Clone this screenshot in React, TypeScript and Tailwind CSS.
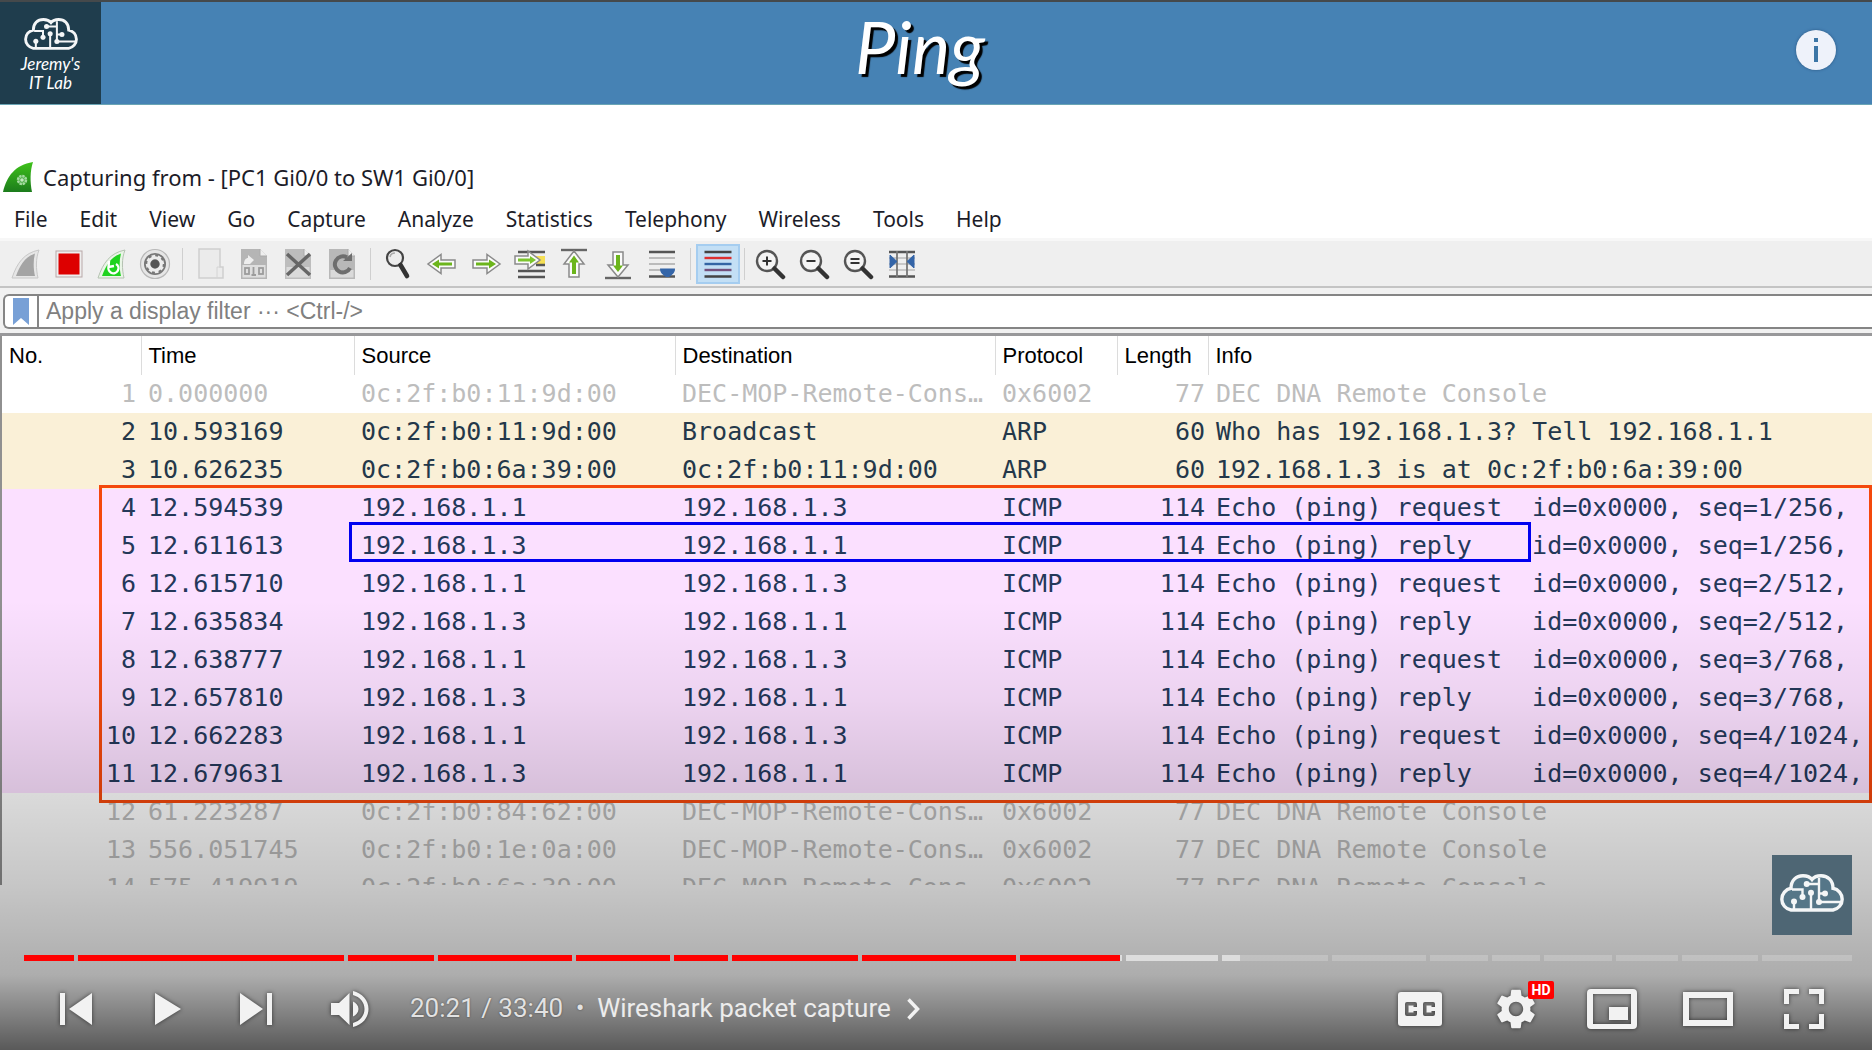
import React from "react";
import { MdSettings } from "react-icons/md";

type Kind = "dec" | "arp" | "icmp";
type Packet = [string, string, string, string, string, string, string, Kind];

const REMOTE = "DEC-MOP-Remote-Cons…";
const CONSOLE = "DEC DNA Remote Console";

const packets: Packet[] = [
  ["1", "0.000000", "0c:2f:b0:11:9d:00", REMOTE, "0x6002", "77", CONSOLE, "dec"],
  ["2", "10.593169", "0c:2f:b0:11:9d:00", "Broadcast", "ARP", "60", "Who has 192.168.1.3? Tell 192.168.1.1", "arp"],
  ["3", "10.626235", "0c:2f:b0:6a:39:00", "0c:2f:b0:11:9d:00", "ARP", "60", "192.168.1.3 is at 0c:2f:b0:6a:39:00", "arp"],
  ["4", "12.594539", "192.168.1.1", "192.168.1.3", "ICMP", "114", "Echo (ping) request  id=0x0000, seq=1/256,", "icmp"],
  ["5", "12.611613", "192.168.1.3", "192.168.1.1", "ICMP", "114", "Echo (ping) reply    id=0x0000, seq=1/256,", "icmp"],
  ["6", "12.615710", "192.168.1.1", "192.168.1.3", "ICMP", "114", "Echo (ping) request  id=0x0000, seq=2/512,", "icmp"],
  ["7", "12.635834", "192.168.1.3", "192.168.1.1", "ICMP", "114", "Echo (ping) reply    id=0x0000, seq=2/512,", "icmp"],
  ["8", "12.638777", "192.168.1.1", "192.168.1.3", "ICMP", "114", "Echo (ping) request  id=0x0000, seq=3/768,", "icmp"],
  ["9", "12.657810", "192.168.1.3", "192.168.1.1", "ICMP", "114", "Echo (ping) reply    id=0x0000, seq=3/768,", "icmp"],
  ["10", "12.662283", "192.168.1.1", "192.168.1.3", "ICMP", "114", "Echo (ping) request  id=0x0000, seq=4/1024,", "icmp"],
  ["11", "12.679631", "192.168.1.3", "192.168.1.1", "ICMP", "114", "Echo (ping) reply    id=0x0000, seq=4/1024,", "icmp"],
  ["12", "61.223287", "0c:2f:b0:84:62:00", REMOTE, "0x6002", "77", CONSOLE, "dec"],
  ["13", "556.051745", "0c:2f:b0:1e:0a:00", REMOTE, "0x6002", "77", CONSOLE, "dec"],
  ["14", "575.419919", "0c:2f:b0:6a:39:00", REMOTE, "0x6002", "77", CONSOLE, "dec"],
];

const rowStyle: Record<Kind, string> = {
  dec: "text-[#bdbdbd]",
  arp: "bg-[#faf0d7] text-[#24384a]",
  icmp: "bg-[#fbe0ff] text-[#24385a]",
};

const menus = ["File", "Edit", "View", "Go", "Capture", "Analyze", "Statistics", "Telephony", "Wireless", "Tools", "Help"];
const columns = ["No.", "Time", "Source", "Destination", "Protocol", "Length", "Info"];

/* Chapter lengths, with the share that is played and loaded. */
const chapters = [
  { size: 50, played: 100, loaded: 100 },
  { size: 266, played: 100, loaded: 100 },
  { size: 86, played: 100, loaded: 100 },
  { size: 134, played: 100, loaded: 100 },
  { size: 94, played: 100, loaded: 100 },
  { size: 54, played: 100, loaded: 100 },
  { size: 126, played: 100, loaded: 100 },
  { size: 154, played: 100, loaded: 100 },
  { size: 102, played: 98, loaded: 100 },
  { size: 92, played: 0, loaded: 100 },
  { size: 106, played: 0, loaded: 17 },
  { size: 94, played: 0, loaded: 0 },
  { size: 58, played: 0, loaded: 0 },
  { size: 48, played: 0, loaded: 0 },
  { size: 68, played: 0, loaded: 0 },
  { size: 62, played: 0, loaded: 0 },
  { size: 76, played: 0, loaded: 0 },
  { size: 90, played: 0, loaded: 0 },
];

function CloudLogo({ className, fill }: { className: string; fill: string }) {
  return (
    <svg viewBox="0 0 68 38" className={className} fill="none" stroke="#f4f6f7" aria-hidden="true">
      <path
        d="M13 36A11 11 0 0 1 13 14.300C13 6.500 18 1.800 25 1.800C29 1.800 32 3 34 5.500C36 3 39 1.800 43 1.800C50 1.800 55 6.500 55 14.300A11 11 0 0 1 55 36Z"
        fill={fill}
        strokeWidth="3.400"
      />
      <path d="M28.700 10H41M41 4V28M47 19.500H41M41 28H64M33 19V36M24.500 23V15.500H14M16 27V36" strokeWidth="2.400" />
      <g fill="#f4f6f7" stroke="none">
        <circle cx="28.700" cy="10" r="3" />
        <circle cx="47" cy="19.500" r="3" />
        <circle cx="41" cy="28" r="3" />
        <circle cx="33" cy="18.700" r="3" />
        <circle cx="24.500" cy="23" r="3" />
        <circle cx="16" cy="27.500" r="3" />
      </g>
    </svg>
  );
}

function Icon({ children }: { children: React.ReactNode }) {
  return (
    <svg viewBox="0 0 32 32" className="size-8" fill="none" aria-hidden="true">
      {children}
    </svg>
  );
}

const FIN = "M2 30C7 15 14 5 29 2C25.500 11 26 21 28 30Z";
const FIN_IN = "M6 28C10 17 15 9 25 5.500C23 13 23.500 21 25 28Z";
const DOC = "M3 1H22L29 8V31H3Z";
const ARROW_R = "M3 12H17V6.500L30 16L17 25.500V20H3Z";
const ARROW_R_IN = "M6 14.500H19V11.500L26 16L19 20.500V17.500H6Z";

function Magnifier({ children }: { children?: React.ReactNode }) {
  return (
    <Icon>
      <circle cx="13" cy="13" r="10" fill="#f4f4f4" stroke="#555" strokeWidth="2.400" />
      <path d="M20.500 20.500L29 29" stroke="#333" strokeWidth="4.500" strokeLinecap="round" />
      <g stroke="#333" strokeWidth="2">{children}</g>
    </Icon>
  );
}

const startTools: [string, React.ReactNode][] = [
  ["Start capture", <Icon><path d={FIN} fill="#e6e6e6" stroke="#c8c8c8" /><path d={FIN_IN} fill="#a4a4a4" /></Icon>],
  ["Stop capture", <Icon><rect x="3" y="3" width="26" height="26" fill="#eee" stroke="#b9a9a9" /><rect x="5.500" y="5.500" width="21" height="21" fill="#dd0000" /></Icon>],
  ["Restart capture", <Icon><path d={FIN} fill="#e9f5e6" stroke="#b5c2b2" /><path d={FIN_IN} fill="#1fd31f" /><path d="M13 18A5 5 0 1 0 20 16M13 13L12.500 19L18 18" stroke="#fff" strokeWidth="2.400" /></Icon>],
  ["Capture options", <Icon><circle cx="16" cy="16" r="14.500" fill="#e6e6e6" stroke="#b8b8b8" strokeWidth="1.200" /><circle cx="16" cy="16" r="11" fill="#777" /><circle cx="16" cy="16" r="7" stroke="#ececec" strokeWidth="4.500" /><circle cx="16" cy="16" r="8.800" stroke="#777" strokeWidth="2" strokeDasharray="3 3.900" /><circle cx="16" cy="16" r="4.300" fill="#555" /></Icon>],
];

const fileTools: [string, React.ReactNode][] = [
  ["Open", <Icon><path d="M5 1H26V19H29V30H5Z" fill="#ebebeb" stroke="#cfcfcf" strokeWidth="1.500" /><path d="M26 19H23V30" stroke="#d4d4d4" /></Icon>],
  ["Save", <Icon><path d={DOC} fill="#b5b5b5" /><path d="M4.500 17H27.500V29.500H4.500Z" fill="#dedede" /><path d="M22 1V8H29" fill="#eee" stroke="#aaa" /><path d="M6 16C6 12 8 10 10 10V7L16 12L12 16Z" fill="#eee" /><g stroke="#9c9c9c" strokeWidth="1.800"><rect x="7" y="20" width="4" height="6" /><path d="M15.500 19V27M13.500 27H18" /><rect x="21" y="20" width="4" height="6" /></g></Icon>],
  ["Close", <Icon><path d={DOC} fill="#bdbdbd" /><path d="M4.500 19H27.500V29.500H4.500Z" fill="#dadada" /><path d="M22 1V8H29" fill="#eee" stroke="#aaa" /><path d="M5 6L28 27M28 6L5 27" stroke="#666" strokeWidth="3.500" /></Icon>],
  ["Reload", <Icon><path d={DOC} fill="#b8b8b8" /><path d="M4.500 22H27.500V29.500H4.500Z" fill="#dadada" /><path d="M22 1V8H29" fill="#eee" stroke="#aaa" /><path d="M21 9.500A8 8 0 1 0 24 20" stroke="#6e6e6e" strokeWidth="4" /><path d="M17 13H26V5Z" fill="#6e6e6e" /></Icon>],
];

const goTools: [string, React.ReactNode][] = [
  ["Find", <Icon><circle cx="13" cy="10" r="8" fill="#ececec" stroke="#444" strokeWidth="2.200" /><path d="M8 9A5 5 0 0 1 13 5" stroke="#aaa" strokeWidth="1.500" /><path d="M18.500 17L25 28" stroke="#333" strokeWidth="4.600" strokeLinecap="round" /></Icon>],
  ["Previous packet", <Icon><g transform="matrix(-1 0 0 1 32 0)"><path d={ARROW_R} fill="#fbfbfb" stroke="#8a8a8a" strokeWidth="1.500" /><path d={ARROW_R_IN} fill="#6cb51c" /></g></Icon>],
  ["Next packet", <Icon><path d={ARROW_R} fill="#fbfbfb" stroke="#8a8a8a" strokeWidth="1.500" /><path d={ARROW_R_IN} fill="#6cb51c" /></Icon>],
  ["Go to packet", <Icon><path d="M20 8H31V16H20Z" fill="#f5df55" /><path d="M4 4H31M4 23H31M4 29H31M22 17H31" stroke="#555" strokeWidth="2.400" /><path d="M1 8H14V3L26 12L14 21V16H1Z" fill="#fbfbfb" stroke="#8a8a8a" strokeWidth="1.500" /><path d="M4 10.500H16V8L22 12L16 16V13.500H4Z" fill="#7cc52e" /></Icon>],
  ["First packet", <Icon><path d="M3 2H29" stroke="#666" strokeWidth="2.400" /><path d="M16 3L26 16H21V29H11V16H6Z" fill="#fbfbfb" stroke="#8a8a8a" strokeWidth="1.500" /><path d="M16 7.500L21 14.500H18V26H14V14.500H11Z" fill="#6cb51c" /></Icon>],
  ["Last packet", <Icon><path d="M3 30H29" stroke="#666" strokeWidth="2.400" /><path d="M16 29L26 17H21V4H11V17H6Z" fill="#fbfbfb" stroke="#8a8a8a" strokeWidth="1.500" /><path d="M16 24L21 17.500H18V7H14V17.500H11Z" fill="#6cb51c" /></Icon>],
  ["Auto scroll", <Icon><path d="M3 4H29M3 28.500H29" stroke="#555" strokeWidth="2.400" /><path d="M3 10H29M3 16H29M3 22H29" stroke="#bbb" strokeWidth="2" /><path d="M14 20.500H29C29 25 26 27 23 29H20C17 27 14 25 14 20.500Z" fill="#3465a8" /></Icon>],
];

const zoomTools: [string, React.ReactNode][] = [
  ["Zoom in", <Magnifier><path d="M8.500 13H17.500M13 8.500V17.500" /></Magnifier>],
  ["Zoom out", <Magnifier><path d="M8.500 13H17.500" /></Magnifier>],
  ["Normal size", <Magnifier><path d="M8.500 11H17.500M8.500 15H17.500" /></Magnifier>],
  ["Resize columns", <Icon><path d="M3 10H29M3 16H29M3 22H29" stroke="#c8c8c8" strokeWidth="2" /><path d="M3 4H29M3 28.500H29" stroke="#555" strokeWidth="2.400" /><path d="M11 3V29M21 3V29" stroke="#777" strokeWidth="1.800" /><path d="M4 7L11 13.500L4 20ZM28 7L21 13.500L28 20Z" fill="#3465a8" stroke="#3465a8" /></Icon>],
];

function Tool({ label, wide, children }: { label: string; wide?: boolean; children: React.ReactNode }) {
  return (
    <button type="button" aria-label={label} className={`flex h-10 items-center justify-center ${wide ? "w-11" : "w-[43px]"}`}>
      {children}
    </button>
  );
}

function Separator() {
  return (
    <div className="flex w-3 justify-center">
      <div className="h-8 w-px bg-[#cfcfcf]" />
    </div>
  );
}

function SlideHeader() {
  return (
    <header className="grid h-[105px] grid-cols-[1fr_auto_1fr] items-start border-t-2 border-b border-t-[#45494b] border-b-[#6aa5b5] bg-[#4682b4]">
      <div className="flex h-[102px] w-[101px] flex-col items-center bg-[#1f3d4d] pt-4 text-white">
        <CloudLogo className="h-8 w-[58px]" fill="#1f3d4d" />
        <p className="pt-1 text-center font-['Lato'] text-[17px] leading-[19px] italic">
          Jeremy's
          <br />
          IT Lab
        </p>
      </div>
      <h1 className="pr-8 font-['Lato'] text-7xl leading-[88px] font-normal text-white italic [text-shadow:3px_3px_1px_#000]">Ping</h1>
      <button type="button" aria-label="Info" className="mt-7 mr-9 size-10 justify-self-end rounded-full bg-[#eef2fa] shadow-[0_0_3px_#2a5580]">
        <svg viewBox="0 0 40 40" fill="#3c76a6" aria-hidden="true">
          <path d="M18 8H22V12H18ZM18 16H22V32H18Z" />
        </svg>
      </button>
    </header>
  );
}

function PacketTable() {
  return (
    <div className="relative h-[549px] overflow-hidden border-l-2 border-[#909090] bg-white">
      <table className="w-full table-fixed border-collapse">
        <colgroup>
          <col className="w-[139px]" />
          <col className="w-[213px]" />
          <col className="w-[321px]" />
          <col className="w-[320px]" />
          <col className="w-[122px]" />
          <col className="w-[91px]" />
          <col />
        </colgroup>
        <thead>
          <tr className="h-[39px] font-['Liberation_Sans'] text-[22px] leading-[39px] text-black">
            {columns.map((c) => (
              <th key={c} className="border-r border-[#dcdcdc] pl-[7px] text-left font-normal last:border-r-0">
                {c}
              </th>
            ))}
          </tr>
        </thead>
        <tbody className="font-['DejaVu_Sans_Mono'] text-[25px] leading-[38px]">
          {packets.map(([no, time, src, dst, proto, len, info, kind]) => (
            <tr key={no} className={`h-[38px] whitespace-pre align-top ${rowStyle[kind]}`}>
              <td className="pr-[5px] text-right">{no}</td>
              <td className="pl-[7px]">{time}</td>
              <td className="pl-[7px]">{src}</td>
              <td className="pl-[7px]">{dst}</td>
              <td className="pl-[7px]">{proto}</td>
              <td className="pr-[3px] text-right">{len}</td>
              <td className="pl-2">{info}</td>
            </tr>
          ))}
        </tbody>
      </table>
      <div className="absolute top-[149px] right-0 left-[97px] h-[318px] border-[3px] border-[#f4480c]" />
      <div className="absolute top-[186px] left-[347px] h-10 w-[1182px] border-[3px] border-[#0000f0]" />
    </div>
  );
}

function CaptureWindow() {
  return (
    <section>
      <div className="flex h-10 items-center gap-[10px] pl-[3px]">
        <svg viewBox="0 0 30 30" className="size-[30px]" aria-hidden="true">
          <defs>
            <linearGradient id="fin" x1="0" y1="0" x2="0" y2="1">
              <stop offset="0" stopColor="#3fc21a" />
              <stop offset="1" stopColor="#1c7c1c" />
            </linearGradient>
          </defs>
          <path d="M0 30C4 14 12 3 30 0C27 9 27 20 29 30Z" fill="url(#fin)" />
          <circle cx="19" cy="18" r="4" fill="#4fae48" stroke="#a5dba0" strokeWidth="2.500" strokeDasharray="2.400 0.700" />
          <circle cx="19" cy="18" r="1.800" fill="#c5e8c0" />
        </svg>
        <h2 className="font-['Noto_Sans'] text-[22px] leading-8 text-[#1c1c28]">Capturing from - [PC1 Gi0/0 to SW1 Gi0/0]</h2>
      </div>
      <nav className="flex h-[41px] items-center gap-8 pt-1 pl-[14px] font-['Noto_Sans'] text-[21px] text-[#1c1c28]">
        {menus.map((m) => (
          <button key={m} type="button">
            {m}
          </button>
        ))}
      </nav>
      <div className="flex h-[50px] items-center border-t-[3px] border-b-2 border-t-[#f7f7f7] border-b-[#c4c4c4] bg-[#efefef] pl-1">
        {startTools.map(([l, i]) => <Tool key={l} label={l}>{i}</Tool>)}
        <Separator />
        {fileTools.map(([l, i]) => <Tool key={l} label={l} wide>{i}</Tool>)}
        <Separator />
        {goTools.map(([l, i]) => <Tool key={l} label={l} wide>{i}</Tool>)}
        <Separator />
        <button type="button" aria-label="Colorize packets" aria-pressed="true" className="flex h-10 w-11 items-center justify-center border-2 border-[#a5cdf0] bg-[#c3dff5]">
          <Icon>
            <path d="M2.500 4H29.500M2.500 28.500H29.500" stroke="#444" strokeWidth="2.400" />
            <path d="M2.500 10H29.500" stroke="#dc3030" strokeWidth="2.400" />
            <path d="M2.500 16H29.500" stroke="#3465a4" strokeWidth="2.400" />
            <path d="M2.500 22H29.500" stroke="#75507b" strokeWidth="2.400" />
          </Icon>
        </button>
        <div className="flex w-2 justify-center">
          <div className="h-8 w-px bg-[#cfcfcf]" />
        </div>
        {zoomTools.map(([l, i]) => <Tool key={l} label={l} wide>{i}</Tool>)}
      </div>
      <div className="border-b-[3px] border-[#98989a] bg-[#f1f1f1] pt-[6px] pb-1 pl-[3px]">
        <div className="flex h-[35px] items-stretch rounded-l-md border-y-2 border-l-2 border-[#858585] bg-white">
          <button type="button" aria-label="Filter bookmarks" className="flex w-[34px] items-center justify-center border-r-2 border-[#858585]">
            <svg viewBox="0 0 16 27" className="h-[27px] w-4" fill="#78a0d6" aria-hidden="true">
              <path d="M0 0H16V27L8 20L0 27Z" />
            </svg>
          </button>
          <input
            type="text"
            aria-label="Display filter"
            placeholder="Apply a display filter ··· <Ctrl-/>"
            className="min-w-0 flex-1 bg-transparent pl-[7px] font-['Liberation_Sans'] text-[23px] outline-none placeholder:text-[#808080]"
          />
        </div>
      </div>
      <PacketTable />
    </section>
  );
}

function ProgressBar() {
  return (
    <div className="relative flex h-[6px] gap-1 pr-5 pl-6">
      {chapters.map((c, i) => (
        <div key={i} className="relative basis-0 bg-white/20" style={{ flexGrow: c.size }}>
          <div className="absolute inset-y-0 left-0 bg-[#dddddd]" style={{ width: `${c.loaded}%` }} />
          <div className="absolute inset-y-0 left-0 bg-[#ff0000]" style={{ width: `${c.played}%` }} />
        </div>
      ))}
      <input type="range" aria-label="Seek" min={0} max={2020} defaultValue={1221} className="absolute inset-0 w-full cursor-pointer opacity-0" />
    </div>
  );
}

function PlayerButton({ label, className, children }: { label: string; className: string; children: React.ReactNode }) {
  return (
    <button type="button" aria-label={label} className={`relative flex h-20 items-center justify-center text-[#f2f2f2] ${className}`}>
      {children}
    </button>
  );
}

const glyph = "fill-current drop-shadow-[0_0_2px_rgba(0,0,0,0.6)]";

function PlayerControls() {
  return (
    <div className="flex h-[89px] items-center pt-[6px] pr-5 pl-[30px] font-['Roboto'] text-[26px] text-[#e2e2e2]">
      <PlayerButton label="Previous" className="w-[92px]">
        <svg viewBox="0 0 32 32" className={`size-8 ${glyph}`}><path d="M0 0H5V32H0ZM32 0V32L9 16Z" /></svg>
      </PlayerButton>
      <PlayerButton label="Play" className="w-[92px]">
        <svg viewBox="0 0 26 32" className={`h-8 w-[26px] ${glyph}`}><path d="M0 0L26 16L0 32Z" /></svg>
      </PlayerButton>
      <PlayerButton label="Next" className="w-[84px]">
        <svg viewBox="0 0 32 32" className={`size-8 ${glyph}`}><path d="M0 0L23 16L0 32ZM27 0H32V32H27Z" /></svg>
      </PlayerButton>
      <PlayerButton label="Mute" className="w-[104px]">
        <svg viewBox="0 0 38 38" className={`size-[38px] ${glyph}`}>
          <path d="M0 13H8L18.500 3V35L8 25H0ZM22 11.500C25 13 27.500 15.500 27.500 19S25 25 22 26.500ZM22 1C31 3 37.500 10 37.500 19S31 35 22 37V33C29 31 33.500 25.500 33.500 19S29 7 22 5Z" />
        </svg>
      </PlayerButton>
      <div className="flex items-center pl-2 whitespace-pre [text-shadow:0_0_2px_rgba(0,0,0,0.5)]">
        <span>20:21 / 33:40</span>
        <span className="w-[34px] text-center">•</span>
        <button type="button" className="flex items-center gap-4 text-[#ececec]">
          Wireshark packet capture
          <svg viewBox="0 0 13 22" className="h-[22px] w-[13px]" fill="none" stroke="#f2f2f2" strokeWidth="3.500" aria-hidden="true">
            <path d="M1.500 1.500L10.500 11L1.500 20.500" />
          </svg>
        </button>
      </div>
      <div className="ml-auto flex">
        <PlayerButton label="Subtitles" className="w-24">
          <svg viewBox="0 0 44 34" className={`h-[34px] w-11 ${glyph}`} fillRule="evenodd">
            <path d="M3 0H41Q44 0 44 3V31Q44 34 41 34H3Q0 34 0 31V3Q0 0 3 0ZM9 10Q7 10 7 12V22Q7 24 9 24H17Q19 24 19 22V19H15.500V20.500H10.500V13.500H15.500V15H19V12Q19 10 17 10ZM27 10Q25 10 25 12V22Q25 24 27 24H35Q37 24 37 22V19H33.500V20.500H28.500V13.500H33.500V15H37V12Q37 10 35 10Z" />
          </svg>
        </PlayerButton>
        <PlayerButton label="Settings" className="w-24">
          <MdSettings size={48} className="drop-shadow-[0_0_2px_rgba(0,0,0,0.6)]" />
          <span className="absolute top-3 right-[10px] flex h-[18px] w-[26px] items-center justify-center rounded-xs bg-[#ff0000] text-sm leading-none font-bold text-white">
            HD
          </span>
        </PlayerButton>
        <PlayerButton label="Miniplayer" className="w-24">
          <svg viewBox="0 0 50 40" className={`h-10 w-[50px] ${glyph}`} fillRule="evenodd">
            <path d="M4 0H46Q50 0 50 4V36Q50 40 46 40H4Q0 40 0 36V4Q0 0 4 0ZM6 5V35H44V5ZM22 18H41V31H22Z" />
          </svg>
        </PlayerButton>
        <PlayerButton label="Theater mode" className="w-24">
          <svg viewBox="0 0 50 34" className={`h-[34px] w-[50px] ${glyph}`} fillRule="evenodd">
            <path d="M0 0H50V34H0ZM6 6V28H44V6Z" />
          </svg>
        </PlayerButton>
        <PlayerButton label="Full screen" className="w-24">
          <svg viewBox="0 0 40 40" className={`size-10 ${glyph}`}>
            <path d="M0 0H15V5H5V15H0ZM25 0H40V15H35V5H25ZM0 25H5V35H15V40H0ZM35 25H40V40H25V35H35Z" />
          </svg>
        </PlayerButton>
      </div>
    </div>
  );
}

export default function App() {
  return (
    <main className="relative min-h-screen overflow-hidden bg-white">
      <SlideHeader />
      <div className="pt-[52px]">
        <CaptureWindow />
      </div>
      <div className="absolute inset-x-0 bottom-0 flex h-[450px] flex-col justify-end bg-[linear-gradient(to_bottom,rgba(0,0,0,0)_0,rgba(0,0,0,0.06)_100px,rgba(0,0,0,0.15)_197px,rgba(0,0,0,0.225)_286px,rgba(0,0,0,0.3)_355px,rgba(0,0,0,0.32)_375px,rgba(0,0,0,0.65)_450px)]">
        <a href="#channel" aria-label="Jeremy's IT Lab" className="mr-5 mb-5 flex size-20 items-center justify-center self-end bg-[#4e6674] pb-1">
          <CloudLogo className="h-[38px] w-[68px]" fill="#557688" />
        </a>
        <ProgressBar />
        <PlayerControls />
      </div>
    </main>
  );
}
